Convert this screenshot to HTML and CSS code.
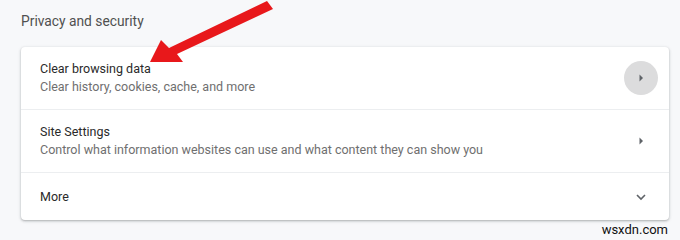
FILE: index.html
```html
<!DOCTYPE html>
<html lang="en">
<head>
    <meta charset="UTF-8">
    <title>Privacy and security</title>
    <link rel="stylesheet" href="styles.css">
</head>
<body>
    <div class="page">
        <h2 class="section-title">Privacy and security</h2>
        <div class="card">
            <div class="row row-tall">
                <div class="row-text">
                    <div class="row-label">Clear browsing data</div>
                    <div class="row-sub">Clear history, cookies, cache, and more</div>
                </div>
                <div class="icon-btn hover">
                    <svg width="10" height="10" viewBox="0 0 10 10"><path d="M3.5 1.5 L7 5 L3.5 8.5 Z" fill="#5f6368"/></svg>
                </div>
            </div>
            <div class="row row-tall">
                <div class="row-text">
                    <div class="row-label">Site Settings</div>
                    <div class="row-sub">Control what information websites can use and what content they can show you</div>
                </div>
                <div class="icon-btn">
                    <svg width="10" height="10" viewBox="0 0 10 10"><path d="M3.5 1.5 L7 5 L3.5 8.5 Z" fill="#5f6368"/></svg>
                </div>
            </div>
            <div class="row">
                <div class="row-text">
                    <div class="row-label">More</div>
                </div>
                <div class="icon-btn">
                    <svg width="14" height="14" viewBox="0 0 14 14"><path d="M3 5 L7 9 L11 5" fill="none" stroke="#5f6368" stroke-width="1.6"/></svg>
                </div>
            </div>
        </div>
        <div class="watermark">wsxdn.com</div>
        <svg class="pointer" width="680" height="240" viewBox="0 0 680 240">
            <path d="M267 1 L273 9 L177 54 L183 62 L150 62 L161 40 L169 48 Z" fill="#e8181b"/>
        </svg>
    </div>
</body>
</html>
```

FILE: styles.css
```css
body {
    margin: 0;
    background-color: #f7f8fa;
    font-family: Roboto, "Liberation Sans", sans-serif;
}

.page {
    position: relative;
    width: 680px;
    height: 240px;
    padding: 13px 11px 0 21px;
    box-sizing: border-box;
}

.section-title {
    margin: 0 0 17px 0;
    font-size: 13.8px;
    font-weight: 400;
    color: #505050;
    line-height: 17px;
}

.card {
    background-color: #fff;
    border-radius: 4px;
    box-shadow: 0 1px 2px rgba(60, 64, 67, 0.3), 0 1px 3px 1px rgba(60, 64, 67, 0.1);
}

.row {
    display: flex;
    align-items: center;
    height: 47px;
    padding: 0 11px 0 19px;
    border-top: 1px solid #eceef0;
}

.row:first-child {
    border-top: none;
}

.row-tall {
    height: 62px;
}

.row-text {
    flex: 1;
}

.row-label {
    font-size: 12.5px;
    color: #2a2a2a;
    line-height: 18px;
}

.row-sub {
    font-size: 12.5px;
    color: #6f6f6f;
    line-height: 18px;
}

.icon-btn {
    width: 34px;
    height: 34px;
    border-radius: 50%;
    display: flex;
    align-items: center;
    justify-content: center;
}

.icon-btn.hover {
    background-color: #dcdcdd;
}

.watermark {
    position: absolute;
    right: 12px;
    bottom: 3px;
    font-size: 13px;
    color: #111;
}

.pointer {
    position: absolute;
    left: 0;
    top: 0;
    pointer-events: none;
}
```
